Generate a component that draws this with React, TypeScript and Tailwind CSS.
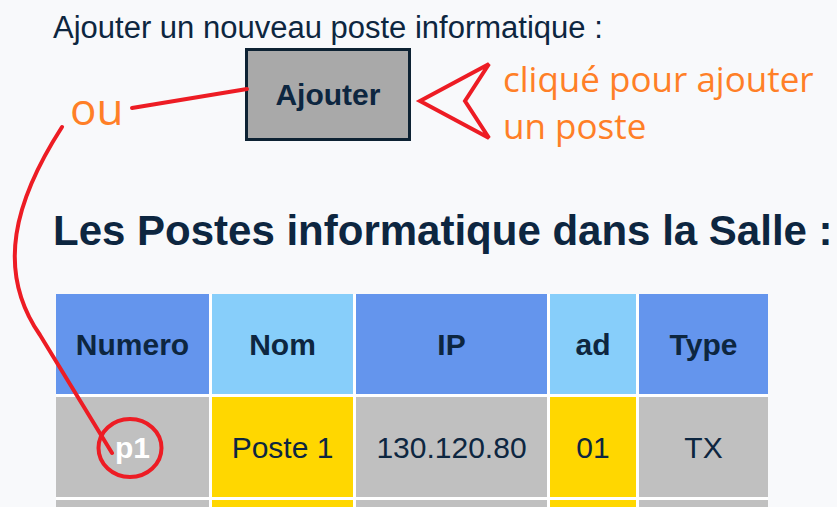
const headers = [
  { label: "Numero", bg: "bg-[#6495ed]" },
  { label: "Nom", bg: "bg-[#87cefa]" },
  { label: "IP", bg: "bg-[#6495ed]" },
  { label: "ad", bg: "bg-[#87cefa]" },
  { label: "Type", bg: "bg-[#6495ed]" },
]

const row = { num: "p1", nom: "Poste 1", ip: "130.120.80", ad: "01", type: "TX" }

// only the top edge of the next row shows in the picture
const nextRow = ["bg-[#c0c0c0]", "bg-[#ffd700]", "bg-[#c0c0c0]", "bg-[#ffd700]", "bg-[#c0c0c0]"]

const Annotations = () => (
  <>
    <svg
      className="pointer-events-none absolute left-0 top-0"
      width="837"
      height="507"
      viewBox="0 0 837 507"
      fill="none"
    >
      <line x1="132" y1="108" x2="247" y2="89" stroke="#ed1c24" strokeWidth="4" strokeLinecap="round" />
      <path
        d="M62 127 C 15 200 -5 270 40 335 L 112 453"
        stroke="#ed1c24"
        strokeWidth="4"
        strokeLinecap="round"
      />
      <ellipse cx="130" cy="448" rx="31.5" ry="29" stroke="#ed1c24" strokeWidth="4" />
      <polygon
        points="489,64 465,101 489,138 420,101"
        stroke="#ed1c24"
        strokeWidth="4"
        strokeLinejoin="miter"
      />
    </svg>
    <div className="absolute left-[70px] top-[86px] font-['Open_Sans',sans-serif] text-[44px] leading-[44px] text-[#ff7f27]">
      ou
    </div>
    <div className="absolute left-[503px] top-[55px] font-['Open_Sans',sans-serif] text-[35px] leading-[47px] text-[#ff7f27]">
      cliqué pour ajouter
      <br />
      un poste
    </div>
  </>
)

export default function App() {
  return (
    <div className="relative h-[507px] overflow-hidden bg-[#f8f9fb] pl-[53px] font-['Liberation_Sans',Arial,sans-serif] text-[#0d2640]">
      <div className="flex w-fit flex-col items-center pt-[10px]">
        <p className="text-[31px] leading-[36px]">Ajouter un nouveau poste informatique :</p>
        <button className="mt-[2px] h-[93px] w-[166px] border-[3px] border-[#0d2233] bg-[#a9a9a9] text-[30px] font-bold text-[#0d2640]">
          Ajouter
        </button>
      </div>

      <h2 className="mt-[66px] text-[42px] font-bold leading-[48px]">
        Les Postes informatique dans la Salle :
      </h2>

      <div className="ml-[3px] mt-[39px] grid w-fit grid-cols-[153px_141px_191px_86px_129px] gap-[3px] bg-white">
        {headers.map((h) => (
          <div
            key={h.label}
            className={`flex h-[100px] items-center justify-center text-[30px] font-bold ${h.bg}`}
          >
            {h.label}
          </div>
        ))}
        <div className="flex h-[100px] items-center justify-center bg-[#c0c0c0] text-[30px] font-bold text-white">
          {row.num}
        </div>
        <div className="flex h-[100px] items-center justify-center bg-[#ffd700] text-[30px]">{row.nom}</div>
        <div className="flex h-[100px] items-center justify-center bg-[#c0c0c0] text-[30px]">{row.ip}</div>
        <div className="flex h-[100px] items-center justify-center bg-[#ffd700] text-[30px]">{row.ad}</div>
        <div className="flex h-[100px] items-center justify-center bg-[#c0c0c0] text-[30px]">{row.type}</div>
        {nextRow.map((bg, i) => (
          <div key={i} className={`h-[100px] ${bg}`} />
        ))}
      </div>

      <Annotations />
    </div>
  )
}
